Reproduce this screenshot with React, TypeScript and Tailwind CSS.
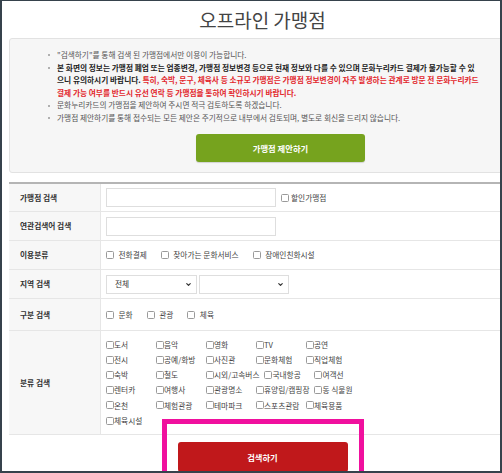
import { ChevronDown } from "lucide-react";

const categories: string[][] = [
    ["도서", "음악", "영화", "TV", "공연"],
    ["전시", "공예/화방", "사진관", "문화체험", "직업체험"],
    ["숙박", "철도", "시외/고속버스", "국내항공", "여객선"],
    ["렌터카", "여행사", "관광명소", "휴양림/캠핑장", "동 식물원"],
    ["온천", "체험관광", "테마파크", "스포츠관람", "체육용품"],
    ["체육시설"],
];

function Box() {
    return (
        <input
            type="checkbox"
            className="m-0 h-[8px] w-[8px] shrink-0 appearance-none rounded-[1.5px] border border-[#9a9a9a] bg-white"
        />
    );
}

function Check({ label }: { label: string }) {
    return (
        <label className="mr-[14px] flex items-center gap-[4.5px] text-[#444]">
            <Box />
            <span>{label}</span>
        </label>
    );
}

function Bullet({ children }: { children: React.ReactNode }) {
    return (
        <li className="flex">
            <span className="flex h-[12.6px] w-[9px] shrink-0 items-center">
                <span className="h-[2px] w-[2px] bg-[#b0b0b0]" />
            </span>
            <span className="whitespace-nowrap">{children}</span>
        </li>
    );
}

function Row({
    label,
    height,
    children,
}: {
    label: string;
    height: string;
    children: React.ReactNode;
}) {
    return (
        <div className={`flex border-b border-[#e6e6e6] ${height}`}>
            <div className="flex w-[92px] shrink-0 items-center border-r border-[#e6e6e6] bg-[#f7f7f7] pl-[11px] font-bold text-[#333]">
                {label}
            </div>
            <div className="flex flex-1 items-center pl-[5px]">{children}</div>
        </div>
    );
}

function Select({ value, width }: { value: string; width: string }) {
    return (
        <div className={`relative h-[19px] ${width}`}>
            <select className="h-full w-full appearance-none border border-[#dedede] bg-white pl-[8px] text-[7.7px] text-[#333] outline-none">
                <option>{value}</option>
            </select>
            <ChevronDown
                size={7}
                strokeWidth={4}
                className="pointer-events-none absolute right-[5px] top-[6px] text-[#333]"
            />
        </div>
    );
}

export default function App() {
    return (
        <div className="relative h-[473px] w-[502px] overflow-hidden border-b-2 border-l-2 border-r-2 border-t border-[#36424c] bg-white font-['Noto_Sans_CJK_KR','Noto_Sans',sans-serif] text-[7.7px]">
            <div className="w-[521px]">
                <h1 className="h-[37px] pt-[6px] text-center text-[19px] leading-[26px] text-[#444]">
                    오프라인 가맹점
                </h1>

                <div className="mx-[7px] rounded-[3px] border border-[#e2e2e2] bg-[#f6f6f6] pb-[10px] pt-[10px]">
                    <ul className="pl-[38px] leading-[12.6px] text-[#555]">
                        <Bullet>"검색하기"를 통해 검색 된 가맹점에서만 이용이 가능합니다.</Bullet>
                        <Bullet>
                            <span className="font-bold text-[#222]">
                                본 화면의 정보는 가맹점 폐업 또는 업종변경, 가맹점 정보변경 등으로 현재 정보와 다를 수 있으며 문화누리카드 결제가 불가능할 수 있
                                <br />
                                으니 유의하시기 바랍니다.{" "}
                            </span>
                            <span className="font-bold text-[#e2262c]">
                                특히, 숙박, 문구, 체육사 등 소규모 가맹점은 가맹점 정보변경이 자주 발생하는 관계로 방문 전 문화누리카드
                                <br />
                                결제 가능 여부를 반드시 유선 연락 등 가맹점을 통하여 확인하시기 바랍니다.
                            </span>
                        </Bullet>
                        <Bullet>문화누리카드의 가맹점을 제안하여 주시면 적극 검토하도록 하겠습니다.</Bullet>
                        <Bullet>가맹점 제안하기를 통해 접수되는 모든 제안은 주기적으로 내부에서 검토되며, 별도로 회신을 드리지 않습니다.</Bullet>
                    </ul>

                    <button className="ml-[186px] mt-[9.5px] flex h-[28px] w-[169px] items-center justify-center rounded-[3px] bg-[#76a31e] text-[8.3px] font-bold text-white shadow-[0_1px_1px_rgba(0,0,0,0.15)]">
                        가맹점 제안하기
                    </button>
                </div>

                <div className="mx-[7px] mt-[9px] border-t-2 border-[#b5b5b5]">
                    <Row label="가맹점 검색" height="h-[28px]">
                        <input className="h-[19px] w-[170px] border border-[#dedede] bg-white" />
                        <label className="ml-[5px] flex items-center gap-[2px] text-[#444]">
                            <Box />
                            <span>할인가맹점</span>
                        </label>
                    </Row>
                    <Row label="연관검색어 검색" height="h-[29px]">
                        <input className="h-[19px] w-[170px] border border-[#dedede] bg-white" />
                    </Row>
                    <Row label="이용분류" height="h-[29px]">
                        <Check label="전화결제" />
                        <Check label="찾아가는 문화서비스" />
                        <Check label="장애인친화시설" />
                    </Row>
                    <Row label="지역 검색" height="h-[29px]">
                        <div className="flex gap-[2px]">
                            <Select value="전체" width="w-[91px]" />
                            <Select value="" width="w-[90px]" />
                        </div>
                    </Row>
                    <Row label="구분 검색" height="h-[32px]">
                        <Check label="문화" />
                        <Check label="관광" />
                        <Check label="체육" />
                    </Row>
                    <Row label="분류 검색" height="h-[104px]">
                        <div className="flex flex-col text-[#444]">
                            {categories.map((row, i) => (
                                <div key={i} className="flex h-[15.2px] items-center">
                                    {row.map((c) => (
                                        <label
                                            key={c}
                                            className="flex min-w-[50px] items-center whitespace-nowrap pr-[5px]"
                                        >
                                            <Box />
                                            <span>{c}</span>
                                        </label>
                                    ))}
                                </div>
                            ))}
                        </div>
                    </Row>
                </div>

                <button className="mx-auto mt-[7px] flex h-[30px] w-[170px] items-center justify-center rounded-[3px] bg-[#c0181b] text-[8.3px] font-bold text-white">
                    검색하기
                </button>
            </div>

            <div className="absolute left-[160px] top-[418px] h-[70px] w-[202px] border-[5px] border-[#f0109e]" />
        </div>
    );
}
